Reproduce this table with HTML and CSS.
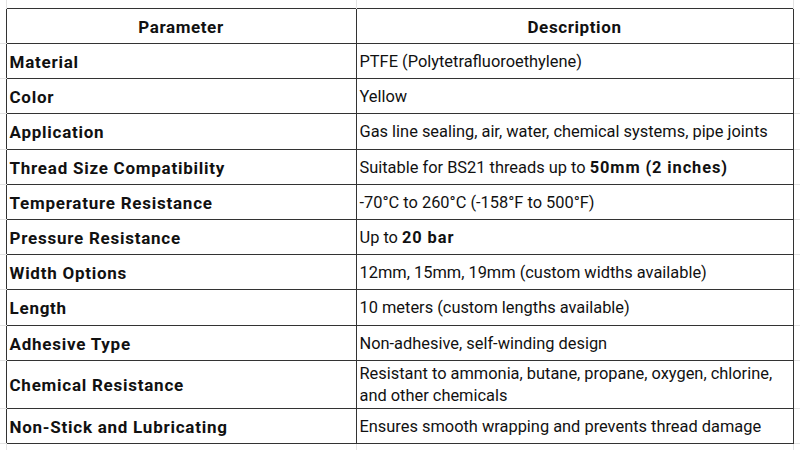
FILE: index.html
```html
<!DOCTYPE html>
<html lang="en">
<head>
<meta charset="utf-8">
<title>PTFE Tape Specifications</title>
<link rel="stylesheet" href="styles.css">
</head>
<body>
<table class="sheet">
  <colgroup>
    <col class="c-gap-l">
    <col class="c-param">
    <col class="c-desc">
    <col class="c-gap-r">
  </colgroup>
  <tr class="r-top">
    <td class="g-top"></td><td class="g-top"></td><td class="g-top"></td><td class="g-top g-last"></td>
  </tr>
  <tr class="r-head">
    <td class="g-side"></td>
    <th class="cell head">Parameter</th>
    <th class="cell head">Description</th>
    <td class="g-side"></td>
  </tr>
  <tr class="r-row">
    <td class="g-side"></td>
    <td class="cell label">Material</td>
    <td class="cell desc">PTFE (Polytetrafluoroethylene)</td>
    <td class="g-side"></td>
  </tr>
  <tr class="r-row">
    <td class="g-side"></td>
    <td class="cell label">Color</td>
    <td class="cell desc">Yellow</td>
    <td class="g-side"></td>
  </tr>
  <tr class="r-row">
    <td class="g-side"></td>
    <td class="cell label">Application</td>
    <td class="cell desc">Gas line sealing, air, water, chemical systems, pipe joints</td>
    <td class="g-side"></td>
  </tr>
  <tr class="r-row">
    <td class="g-side"></td>
    <td class="cell label">Thread Size Compatibility</td>
    <td class="cell desc">Suitable for BS21 threads up to <b>50mm (2 inches)</b></td>
    <td class="g-side"></td>
  </tr>
  <tr class="r-row">
    <td class="g-side"></td>
    <td class="cell label">Temperature Resistance</td>
    <td class="cell desc">-70°C to 260°C (-158°F to 500°F)</td>
    <td class="g-side"></td>
  </tr>
  <tr class="r-row">
    <td class="g-side"></td>
    <td class="cell label">Pressure Resistance</td>
    <td class="cell desc">Up to <b>20 bar</b></td>
    <td class="g-side"></td>
  </tr>
  <tr class="r-row">
    <td class="g-side"></td>
    <td class="cell label">Width Options</td>
    <td class="cell desc">12mm, 15mm, 19mm (custom widths available)</td>
    <td class="g-side"></td>
  </tr>
  <tr class="r-row">
    <td class="g-side"></td>
    <td class="cell label">Length</td>
    <td class="cell desc">10 meters (custom lengths available)</td>
    <td class="g-side"></td>
  </tr>
  <tr class="r-row">
    <td class="g-side"></td>
    <td class="cell label">Adhesive Type</td>
    <td class="cell desc">Non-adhesive, self-winding design</td>
    <td class="g-side"></td>
  </tr>
  <tr class="r-tall">
    <td class="g-side"></td>
    <td class="cell label">Chemical Resistance</td>
    <td class="cell desc">Resistant to ammonia, butane, propane, oxygen, chlorine,<br>and other chemicals</td>
    <td class="g-side"></td>
  </tr>
  <tr class="r-last">
    <td class="g-side"></td>
    <td class="cell label">Non-Stick and Lubricating</td>
    <td class="cell desc">Ensures smooth wrapping and prevents thread damage</td>
    <td class="g-side"></td>
  </tr>
  <tr class="r-bottom">
    <td class="g-bot"></td><td class="g-bot"></td><td class="g-bot"></td><td class="g-bot g-last"></td>
  </tr>
</table>
</body>
</html>
```

FILE: styles.css
```css
html, body {
  margin: 0;
  padding: 0;
  background: #ffffff;
}

body {
  width: 800px;
  height: 450px;
  overflow: hidden;
  font-family: Roboto, "Liberation Sans", Arial, sans-serif;
  color: #111111;
}

.sheet {
  border-collapse: collapse;
  table-layout: fixed;
  width: 800px;
  font-size: 17px;
  line-height: 22px;
}

.c-gap-l { width: 6px; }
.c-param { width: 350px; }
.c-desc { width: 437px; }
.c-gap-r { width: 7px; }

.r-top td { height: 8px; }
.r-head { height: 35px; }
.r-row { height: 35.2px; }
.r-tall { height: 48px; }
.r-last { height: 35px; }
.r-bottom td { height: 7px; }

td, th {
  padding: 0;
}

.g-top,
.g-bot {
  border-right: 1px solid #e3e3e3;
}

.g-last {
  border-right: none;
}

.g-side {
  border-bottom: 1px solid #e3e3e3;
}

.cell {
  border: 1px solid #333333;
  padding: 2px 3px 0 3px;
  vertical-align: middle;
  text-align: left;
  white-space: nowrap;
  overflow: hidden;
}

.head {
  text-align: center;
  font-weight: 700;
  letter-spacing: 0.6px;
}

.label {
  font-weight: 700;
  letter-spacing: 0.75px;
}

.desc {
  font-size: 16.4px;
}

.cell b {
  font-weight: 700;
  letter-spacing: 0.9px;
}
```
